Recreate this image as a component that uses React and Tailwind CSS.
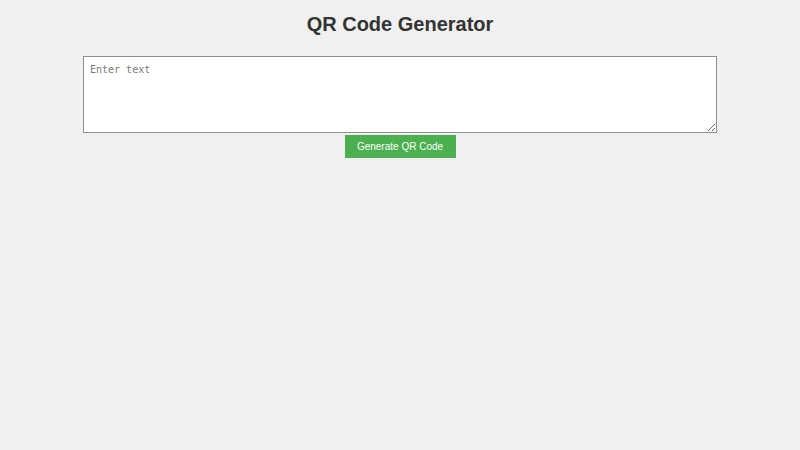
import React, { useState } from "react";

export default function App() {
  const [text, setText] = useState("");

  return (
    <div className="min-h-screen w-full bg-[#f0f0f0] flex flex-col items-center" style={{ fontFamily: '"Liberation Sans", Arial, sans-serif' }}>
      {/* Title */}
      <h1 className="mt-3 text-[20px] leading-6 font-bold text-[#333333]">
        QR Code Generator
      </h1>

      {/* Input */}
      <textarea
        value={text}
        onChange={(e) => setText(e.target.value)}
        placeholder="Enter text"
        className="mt-5 w-[634px] h-[77px] bg-white border border-[#8f8f8f] px-[6px] pt-[5px] pb-[6px] text-[10px] text-[#333] placeholder:text-[#7a7a7a] outline-none"
        style={{ fontFamily: '"DejaVu Sans Mono", "Liberation Mono", monospace' }}
      />

      <button className="mt-[2px] w-[111px] h-[23px] bg-[#4caf50] text-white text-[10px]">
        Generate QR Code
      </button>
    </div>
  );
}
